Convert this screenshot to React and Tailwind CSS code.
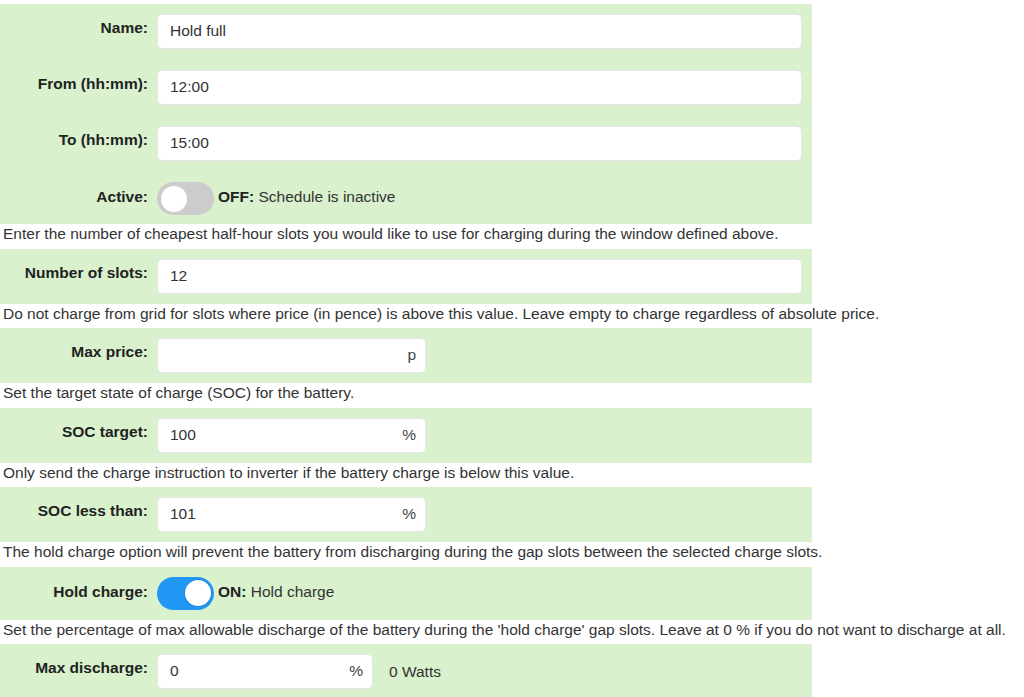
import React from "react";

const font = { fontFamily: '"Liberation Sans", Arial, sans-serif' };

function Label({ children, toggle }) {
  return (
    <div
      className={
        "w-[148px] shrink-0 text-right font-bold text-[15.5px] text-[#222] " +
        (toggle ? "mb-[3px]" : "mb-[7px]")
      }
    >
      {children}
    </div>
  );
}

function TextInput({ value, suffix, width }) {
  return (
    <div
      className={
        "ml-[9px] h-[35px] flex items-center bg-white rounded-[5px] border border-[#e6e6e6] pl-[12px] pr-[9px] pb-[1px] text-[15.5px] text-[#333] " +
        (width || "flex-1")
      }
    >
      <span className="flex-1">{value}</span>
      {suffix && <span className="text-[#444]">{suffix}</span>}
    </div>
  );
}

function Toggle({ on }) {
  return (
    <div
      className={
        "ml-[9px] relative w-[57px] h-[33px] rounded-full shrink-0 " +
        (on ? "bg-[#2196f3]" : "bg-[#cccccc]")
      }
    >
      <div
        className={
          "absolute top-[3.5px] w-[26px] h-[26px] rounded-full bg-white " +
          (on ? "right-[3px] ring-1 ring-[#1e88e5]" : "left-[4px]")
        }
      />
    </div>
  );
}

function Desc({ children }) {
  return (
    <div className="pl-[3px] text-[15.5px] leading-[20.5px] pb-[4px] text-[#333] whitespace-nowrap">
      {children}
    </div>
  );
}

function Block({ children, toggle }) {
  return (
    <div
      className={
        "w-[812px] bg-[#d9f1cd] flex items-center pr-[10px] " +
        (toggle ? "h-[53px]" : "h-[55px]")
      }
    >
      {children}
    </div>
  );
}

export default function App() {
  return (
    <div className="w-[1024px] h-[697px] overflow-hidden bg-white pt-[4px]" style={font}>
      <div className="w-[812px] bg-[#d9f1cd] pt-[10px] pb-[9px] pr-[10px] flex flex-col gap-[21px]">
        <div className="flex items-center">
          <Label>Name:</Label>
          <TextInput value="Hold full" />
        </div>
        <div className="flex items-center">
          <Label>From (hh:mm):</Label>
          <TextInput value="12:00" />
        </div>
        <div className="flex items-center">
          <Label>To (hh:mm):</Label>
          <TextInput value="15:00" />
        </div>
        <div className="flex items-center">
          <Label toggle>Active:</Label>
          <Toggle on={false} />
          <div className="ml-[4px] text-[15.5px] text-[#333] mb-[3px]">
            <span className="font-bold text-[#222]">OFF:</span> Schedule is inactive
          </div>
        </div>
      </div>

      <Desc>
        Enter the number of cheapest half-hour slots you would like to use for charging during the window defined above.
      </Desc>
      <Block>
        <Label>Number of slots:</Label>
        <TextInput value="12" />
      </Block>

      <Desc>
        Do not charge from grid for slots where price (in pence) is above this value. Leave empty to charge regardless of absolute price.
      </Desc>
      <Block>
        <Label>Max price:</Label>
        <TextInput value="" suffix="p" width="w-[269px]" />
      </Block>

      <Desc>Set the target state of charge (SOC) for the battery.</Desc>
      <Block>
        <Label>SOC target:</Label>
        <TextInput value="100" suffix="%" width="w-[269px]" />
      </Block>

      <Desc>Only send the charge instruction to inverter if the battery charge is below this value.</Desc>
      <Block>
        <Label>SOC less than:</Label>
        <TextInput value="101" suffix="%" width="w-[269px]" />
      </Block>

      <Desc>
        The hold charge option will prevent the battery from discharging during the gap slots between the selected charge slots.
      </Desc>
      <Block toggle>
        <Label toggle>Hold charge:</Label>
        <Toggle on={true} />
        <div className="ml-[4px] text-[15.5px] text-[#333] mb-[3px]">
          <span className="font-bold text-[#222]">ON:</span> Hold charge
        </div>
      </Block>

      <Desc>
        Set the percentage of max allowable discharge of the battery during the 'hold charge' gap slots. Leave at 0 % if you do not want to discharge at all.
      </Desc>
      <Block>
        <Label>Max discharge:</Label>
        <TextInput value="0" suffix="%" width="w-[216px]" />
        <div className="ml-[16px] text-[15.5px] text-[#333]">0 Watts</div>
      </Block>
    </div>
  );
}
